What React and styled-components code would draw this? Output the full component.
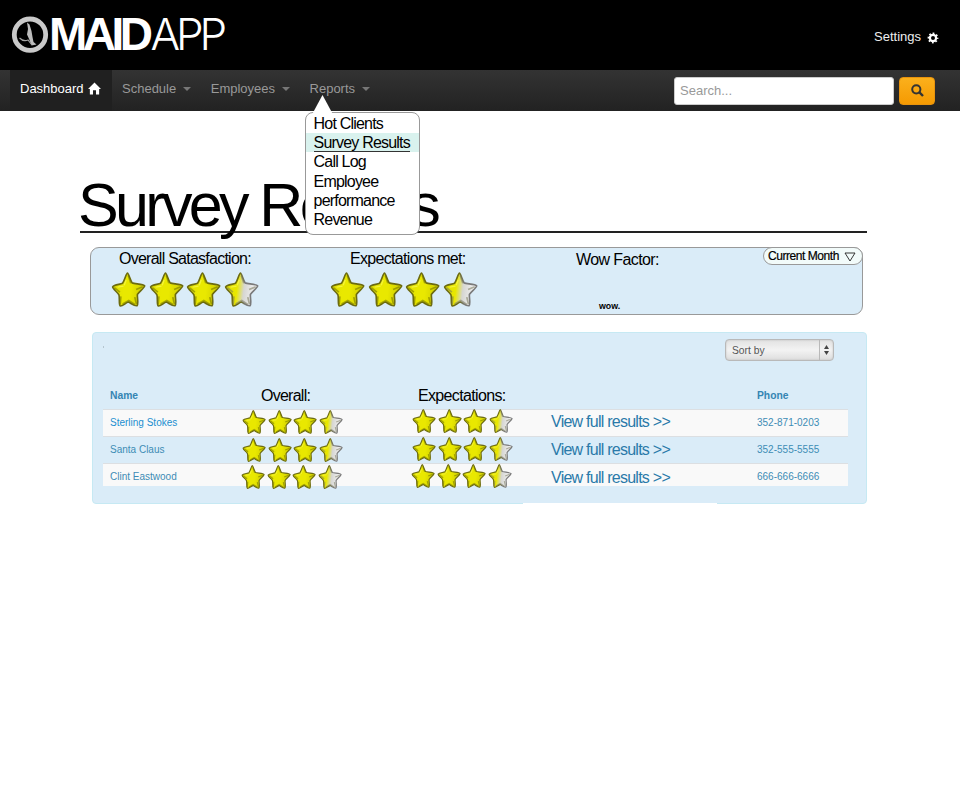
import React, { useId } from "react";
import styled, { createGlobalStyle } from "styled-components";

const GlobalStyle = createGlobalStyle`
  * { box-sizing: border-box; }
  html, body { margin: 0; padding: 0; background: #fff; }
  body { font-family: "Liberation Sans", Arial, sans-serif; color: #000; overflow: hidden; }
  a { text-decoration: none; color: inherit; }
`;

const Page = styled.div`
  width: 960px;
  height: 790px;
  overflow: hidden;
  background: #fff;
`;

const Header = styled.header`
  height: 70px;
  background: #000;
  display: flex;
  justify-content: space-between;
  padding: 0 21px 0 11px;
`;

const Brand = styled.a`
  display: flex;
  align-items: flex-start;
  color: #fff;
  padding-top: 16px;
`;

const BrandBold = styled.span`
  font-size: 46px;
  line-height: 37px;
  font-weight: 700;
  letter-spacing: -4.5px;
`;

const BrandLight = styled.span`
  font-family: Inter, "Liberation Sans", sans-serif;
  font-size: 44px;
  line-height: 37px;
  font-weight: 300;
  letter-spacing: -4.2px;
  margin-left: 2px;
`;

const SettingsLink = styled.a`
  display: flex;
  align-items: center;
  gap: 6px;
  height: 16px;
  margin-top: 29px;
  font-size: 13px;
  line-height: 16px;
  color: #eee;
  svg { margin-top: 2px; }
`;

const NavBar = styled.nav`
  height: 41px;
  background: linear-gradient(#333, #222);
  display: flex;
  justify-content: space-between;
  padding: 0 25px 0 10px;
`;

const NavList = styled.div`
  display: flex;
`;

const NavItem = styled.div`
  position: relative;
  display: flex;
  align-items: center;
  gap: ${(p) => (p.$active ? 4 : 6.5)}px;
  width: ${(p) => (p.$active ? "102px" : "auto")};
  height: 41px;
  padding: 0 10px 4px;
  font-size: 13px;
  color: ${(p) => (p.$active ? "#fff" : "#999")};
  background: ${(p) => (p.$active ? "#202020" : "transparent")};
  white-space: nowrap;
  > svg { flex: none; }
`;

const Caret = styled.span`
  border: 4px solid transparent;
  border-top-color: #777;
  border-bottom: 0;
  margin-top: 1px;
`;

const Search = styled.form`
  display: flex;
  gap: 5px;
  padding-top: 7px;
`;

const SearchInput = styled.input`
  width: 220px;
  height: 28px;
  border: 1px solid #ccc;
  border-radius: 3px;
  background: #fff;
  padding: 0 5px 2px;
  font: 13px "Liberation Sans", Arial, sans-serif;
  &::placeholder { color: #999; opacity: 1; }
`;

const SearchButton = styled.button`
  width: 36px;
  height: 28px;
  border: 1px solid #e8930c;
  border-radius: 4px;
  background: linear-gradient(#fbb01c, #f59a02);
  padding: 0 0 2px;
  display: flex;
  align-items: center;
  justify-content: center;
`;

const Menu = styled.div`
  position: absolute;
  z-index: 2;
  top: 42px;
  left: 5px;
  width: 115px;
  height: 123px;
  padding-top: 1px;
  border: 1px solid #999;
  border-radius: 8px;
  background: #fff;
  display: flex;
  flex-direction: column;
  svg { position: absolute; left: 6px; top: -18px; }
`;

const MenuItem = styled.a`
  font-size: 16px;
  line-height: 19.2px;
  letter-spacing: -0.8px;
  color: #000;
  padding: 0 8px;
  white-space: nowrap;
  background: ${(p) => (p.$current ? "#d9f2ee" : "transparent")};
  span {
    display: inline-block;
    height: 19px;
    vertical-align: top;
    border-bottom: ${(p) => (p.$current ? "1px solid #333" : "0")};
  }
`;

const Main = styled.main`
  padding: 64px 93px 0 80px;
`;

const Title = styled.h1`
  margin: 0;
  height: 58px;
  border-bottom: 2px solid #222;
  font-size: 61px;
  line-height: 61px;
  font-weight: 400;
  letter-spacing: -3.65px;
  text-indent: -2px;
  white-space: nowrap;
`;

const Summary = styled.section`
  position: relative;
  display: flex;
  width: 773px;
  height: 68px;
  margin: 14px 0 0 10px;
  padding-left: 20px;
  border: 1px solid #999;
  border-radius: 9px;
  background: #daecf8;
`;

const Metric = styled.div`
  display: flex;
  flex-direction: column;
  width: ${(p) => p.$width}px;
  padding-top: ${(p) => p.$top || 0}px;
`;

const Label = styled.div`
  font-size: 16px;
  line-height: 21px;
  letter-spacing: ${(p) => p.$tight || -0.75}px;
  margin-left: ${(p) => p.$indent || 0}px;
  white-space: nowrap;
`;

const Wow = styled.div`
  font-size: 8.8px;
  line-height: 10px;
  font-weight: 700;
  margin: 31px 0 0 23px;
`;

const Period = styled.div`
  position: absolute;
  top: -1px;
  right: -1px;
  width: 100px;
  height: 18px;
  padding-left: 4px;
  border: 1px solid #999;
  border-radius: 9px;
  background: #f2fbfa;
  display: flex;
  align-items: center;
  gap: 5px;
  font-size: 12px;
  line-height: 16px;
  letter-spacing: -0.45px;
  white-space: nowrap;
  -webkit-text-stroke: 0.2px #000;
  svg { margin-top: 2px; }
`;

const Stars = styled.div`
  display: flex;
  gap: ${(p) => p.$gap}px;
  margin: ${(p) => p.$offset || "0"};
  svg { flex: none; display: block; }
`;

const Panel = styled.section`
  position: relative;
  width: 775px;
  height: 172px;
  margin: 17px 0 0 12px;
  padding: 6px 18px 0 10px;
  border: 1px solid #c6e9f3;
  border-radius: 4px;
  background: #daecf8;
  &::before {
    content: "";
    position: absolute;
    left: 10px;
    top: 13px;
    width: 1px;
    height: 2px;
    background: #b5c5cf;
  }
  &::after {
    content: "";
    position: absolute;
    left: 430px;
    bottom: -1px;
    width: 194px;
    height: 1px;
    background: #fff;
  }
`;

const SortSelect = styled.div`
  width: 109px;
  height: 22px;
  margin-left: 622px;
  border: 1px solid #b9b9b9;
  border-radius: 4px;
  background: linear-gradient(#e2e2e2, #f3f3f3 50%, #dedede);
  box-shadow: inset 0 0 2px #bbb;
  display: flex;
  font-size: 10.3px;
  line-height: 21px;
  color: #555;
  span { flex: 1; padding-left: 6px; }
`;

const Stepper = styled.div`
  width: 14px;
  border-left: 1px solid #b9b9b9;
  display: flex;
  align-items: center;
  justify-content: center;
`;

const columns = "139px 171px 138px 199px 98px";

const HeadRow = styled.div`
  display: grid;
  grid-template-columns: ${columns};
  height: 48px;
  padding-top: 24px;
`;

const HeadCell = styled.div`
  font-size: 10.3px;
  font-weight: 700;
  line-height: 22px;
  color: #3585b3;
  padding-left: 7px;
`;

const Row = styled.div`
  display: grid;
  grid-template-columns: ${columns};
  width: 745px;
  height: ${(p) => p.$height}px;
  border-top: 1px solid #dcdfe2;
  background: ${(p) => (p.$light ? "#f9f9f9" : "transparent")};
`;

const Cell = styled.div`
  font-size: 10px;
  line-height: 26px;
  padding-left: 7px;
  color: ${(p) => (p.$bright ? "#1b8fd0" : "#3d8cb5")};
`;

const ResultsLink = styled.a`
  font-size: 16px;
  line-height: 20px;
  letter-spacing: -0.75px;
  color: #2a7aa9;
  white-space: nowrap;
  padding-top: ${(p) => p.$top}px;
`;

const starPath =
  "M48 3 C51 3 56 24 62 33 C70 36 97 37 100 42 C98 50 82 60 78 68 C77 78 82 97 77 102 C69 104 58 94 51 91 C42 93 34 104 26 103 C21 98 25 78 22 69 C18 61 3 52 3 45 C8 38 26 38 33 34 C40 25 44 3 48 3 Z";

function Star({ size, half }) {
  const id = useId();
  return (
    <svg width={size} height={size} viewBox="0 0 102 106">
      <defs>
        <linearGradient id={id} x1="0" y1="0" x2="1" y2="0.12">
          <stop offset="0" stopColor="#dedd00" />
          <stop offset="0.4" stopColor="#e9e800" />
          <stop offset="0.62" stopColor={half ? "#d6d6d2" : "#e9e800"} />
          <stop offset="1" stopColor={half ? "#f4f4f6" : "#cfce00"} />
        </linearGradient>
        <linearGradient id={id + "s"} x1="0" y1="0" x2="1" y2="0">
          <stop offset="0.45" stopColor="#6c6b10" />
          <stop offset="0.6" stopColor={half ? "#7a7a7a" : "#6c6b10"} />
        </linearGradient>
      </defs>
      <path d={starPath} fill={`url(#${id})`} stroke={`url(#${id}s)`} strokeWidth="5" />
      <path
        d="M50 10 L58 34 M94 45 L74 53 M75 97 L70 76 M70 98 L52 86 L33 97 M26 98 L28 74 M8 47 L25 61"
        fill="none"
        stroke={half ? "#77775a" : "#6f6f00"}
        strokeOpacity="0.55"
        strokeWidth="5"
      />
      <path d="M44 24 L38 40 M18 46 L36 43" fill="none" stroke="#fbfb60" strokeOpacity="0.6" strokeWidth="4" />
    </svg>
  );
}

function Rating({ size, gap, offset }) {
  return (
    <Stars $gap={gap} $offset={offset}>
      <Star size={size} />
      <Star size={size} />
      <Star size={size} />
      <Star size={size} half />
    </Stars>
  );
}

const Logo = () => (
  <svg width="38" height="38" viewBox="0 0 38 38">
    <circle cx="19" cy="18.7" r="15.7" fill="#000" stroke="#c9c9c9" strokeWidth="4.8" />
    <path d="M16 6.5 L18.5 8.5 L20.5 15 L21.5 21 L22.5 26 L25.5 28.5 L20.5 29.5 L18.5 24 L16 18.5 L17 13 Z" fill="#bdbdbd" />
    <path d="M8.5 22 Q12.5 26 17 24 L20.5 28.5" fill="none" stroke="#a5a5a5" strokeWidth="1.1" />
  </svg>
);

const HomeIcon = () => (
  <svg width="13" height="13" viewBox="0 0 14 13" fill="#fff">
    <path d="M7 0 L14 7 L12 7 L12 13 L8.6 13 L8.6 8.5 L5.4 8.5 L5.4 13 L2 13 L2 7 L0 7 Z" />
  </svg>
);

const GearIcon = () => (
  <svg width="12" height="12" viewBox="0 0 12 12">
    <circle cx="6" cy="6" r="3.1" fill="none" stroke="#fff" strokeWidth="2.2" />
    <circle cx="6" cy="6" r="4.6" fill="none" stroke="#fff" strokeWidth="1.6" strokeDasharray="1.8 1.81" strokeDashoffset="0.9" />
  </svg>
);

const SearchIcon = () => (
  <svg width="13" height="13" viewBox="0 0 13 13" fill="none" stroke="#333">
    <circle cx="5.3" cy="5.3" r="4.1" strokeWidth="2" />
    <path d="M8.2 8.2 L12 12" strokeWidth="2.4" />
  </svg>
);

const people = [
  { name: "Sterling Stokes", phone: "352-871-0203", height: 27, light: true, bright: true, a: "0", b: "-1px 0 0 -1px", link: 2 },
  { name: "Santa Claus", phone: "352-555-5555", height: 27, a: "1px 0 0 0", b: "0 0 0 -1px", link: 3 },
  { name: "Clint Eastwood", phone: "666-666-6666", height: 23, light: true, a: "1px 0 0 -1px", b: "0 0 0 -2px", link: 4 },
];

export default function App() {
  return (
    <Page>
      <GlobalStyle />
      <Header>
        <Brand>
          <Logo />
          <BrandBold>MAID</BrandBold>
          <BrandLight>APP</BrandLight>
        </Brand>
        <SettingsLink>
          Settings <GearIcon />
        </SettingsLink>
      </Header>
      <NavBar>
        <NavList>
          <NavItem $active>
            Dashboard <HomeIcon />
          </NavItem>
          <NavItem>
            Schedule <Caret />
          </NavItem>
          <NavItem>
            Employees <Caret />
          </NavItem>
          <NavItem>
            Reports <Caret />
            <Menu>
              <svg width="22" height="20" viewBox="0 0 22 20">
                <path d="M10.5 0 L21 19.5 L0 19.5 Z" fill="#fff" />
              </svg>
              <MenuItem><span>Hot Clients</span></MenuItem>
              <MenuItem $current><span>Survey Results</span></MenuItem>
              <MenuItem><span>Call Log</span></MenuItem>
              <MenuItem>Employee<br />performance</MenuItem>
              <MenuItem><span>Revenue</span></MenuItem>
            </Menu>
          </NavItem>
        </NavList>
        <Search>
          <SearchInput placeholder="Search..." />
          <SearchButton type="button">
            <SearchIcon />
          </SearchButton>
        </Search>
      </NavBar>
      <Main>
        <Title>Survey Results</Title>
        <Summary>
          <Metric $width={219}>
            <Label $indent={8}>Overall Satasfaction:</Label>
            <Rating size={35} gap={2.7} offset="3px 0 0 0" />
          </Metric>
          <Metric $width={246}>
            <Label $indent={20} $tight={-0.68}>Expectations met:</Label>
            <Rating size={35} gap={2.7} offset="3px 0 0 0" />
          </Metric>
          <Metric $width={150} $top={1}>
            <Label $tight={-0.6}>Wow Factor:</Label>
            <Wow>wow.</Wow>
          </Metric>
          <Period>
            Current Month
            <svg width="12" height="10" viewBox="0 0 12 10">
              <path d="M1 1 H11 L6 9 Z" fill="none" stroke="#222" strokeWidth="0.9" />
            </svg>
          </Period>
        </Summary>
        <Panel>
          <SortSelect>
            <span>Sort by</span>
            <Stepper>
              <svg width="5" height="10" viewBox="0 0 5 10" fill="#444">
                <path d="M2.5 0 L5 4 H0 Z M0 6 H5 L2.5 10 Z" />
              </svg>
            </Stepper>
          </SortSelect>
          <HeadRow>
            <HeadCell>Name</HeadCell>
            <Label $indent={19}>Overall:</Label>
            <Label $indent={5} $tight={-0.65}>Expectations:</Label>
            <div />
            <HeadCell>Phone</HeadCell>
          </HeadRow>
          {people.map((p) => (
            <Row key={p.name} $height={p.height} $light={p.light}>
              <Cell $bright={p.bright}>{p.name}</Cell>
              <Rating size={24} gap={1.7} offset={p.a} />
              <Rating size={24} gap={1.7} offset={p.b} />
              <ResultsLink $top={p.link}>View full results &gt;&gt;</ResultsLink>
              <Cell>{p.phone}</Cell>
            </Row>
          ))}
        </Panel>
      </Main>
    </Page>
  );
}
